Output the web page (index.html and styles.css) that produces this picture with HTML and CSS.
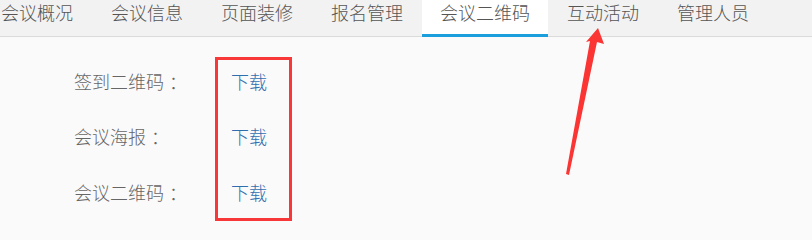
FILE: index.html
```html
<!DOCTYPE html>
<html lang="zh-CN">
<head>
<meta charset="utf-8">
<link rel="stylesheet" href="styles.css">
</head>
<body>
<div class="page">
  <nav class="tabs">
    <a class="tab">会议概况</a>
    <a class="tab">会议信息</a>
    <a class="tab">页面装修</a>
    <a class="tab">报名管理</a>
    <a class="tab active">会议二维码</a>
    <a class="tab">互动活动</a>
    <a class="tab">管理人员</a>
  </nav>
  <div class="content">
    <div class="row"><span class="label">签到二维码<span class="colon">：</span></span><a class="link">下载</a></div>
    <div class="row"><span class="label">会议海报<span class="colon">：</span></span><a class="link">下载</a></div>
    <div class="row"><span class="label">会议二维码<span class="colon">：</span></span><a class="link">下载</a></div>
  </div>
  <div class="highlight"></div>
  <svg class="arrow" width="812" height="225" viewBox="0 0 812 225">
    <path d="M598 28 L604 44 L597 42 L569 175 L566 174 L590 41 L586 42 Z" fill="#fb3434"/>
  </svg>
</div>
</body>
</html>
```
FILE: styles.css
```css
html, body {
  margin: 0;
  padding: 0;
  background: #fafafa;
  overflow: hidden;
}
.page {
  position: relative;
  width: 812px;
  height: 225px;
  overflow: hidden;
  font-family: "Microsoft YaHei", "Noto Sans CJK SC", sans-serif;
  font-weight: 300;
}
.tabs {
  display: flex;
  height: 36px;
  background: #f2f2f2;
  border-bottom: 1px solid #dadada;
  margin-left: -18px;
}
.tab {
  display: block;
  padding: 0 19px;
  height: 36px;
  line-height: 24px;
  font-size: 18px;
  color: #555;
  box-sizing: border-box;
}
.tab.active {
  background: #fff;
  border-bottom: 3px solid #1a9fdc;
  height: 37px;
  padding: 0 18px 0 18px;
}
.content {
  padding: 25px 0 0 74px;
}
.row {
  display: flex;
  align-items: center;
  height: 55.5px;
  line-height: 24px;
  font-size: 18px;
}
.row:first-child { margin-top: -9px; }
.label {
  width: 157px;
  color: #666;
}
.colon {
  padding-left: 5px;
}
.link {
  color: #2f6fb0;
}
.highlight {
  position: absolute;
  left: 215px;
  top: 57px;
  width: 77px;
  height: 164px;
  box-sizing: border-box;
  border: 3px solid #f83838;
}
.arrow {
  position: absolute;
  left: 0;
  top: 0;
}
```
